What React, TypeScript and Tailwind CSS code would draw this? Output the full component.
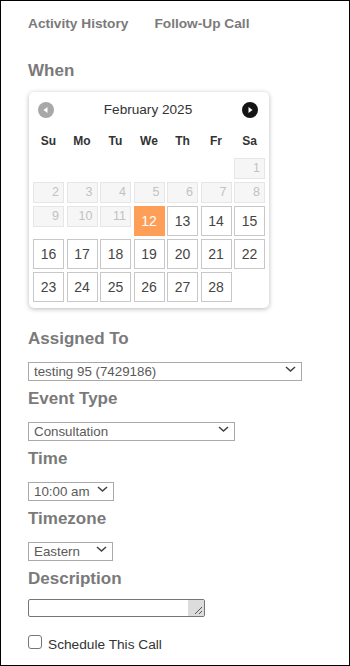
import React from "react"

const font = { fontFamily: '"Liberation Sans", Arial, sans-serif' }

type Cell = { day: number; kind: "past" | "today" | "open" } | null

const rows: Cell[][] = [
  [null, null, null, null, null, null, { day: 1, kind: "past" }],
  [2, 3, 4, 5, 6, 7, 8].map((d) => ({ day: d, kind: "past" as const })),
  [
    { day: 9, kind: "past" },
    { day: 10, kind: "past" },
    { day: 11, kind: "past" },
    { day: 12, kind: "today" },
    { day: 13, kind: "open" },
    { day: 14, kind: "open" },
    { day: 15, kind: "open" },
  ],
  [16, 17, 18, 19, 20, 21, 22].map((d) => ({ day: d, kind: "open" as const })),
  [
    ...[23, 24, 25, 26, 27, 28].map((d) => ({ day: d, kind: "open" as const })),
    null,
  ],
]

const weekdays = ["Su", "Mo", "Tu", "We", "Th", "Fr", "Sa"]

function DayCell({ cell }: { cell: Cell }) {
  if (!cell) return <div className="w-[31px] shrink-0" />
  if (cell.kind === "past") {
    return (
      <div className="flex h-[21px] w-[31px] shrink-0 items-center justify-end border border-[#e6e6e6] bg-[#f6f6f6] pr-[4px] text-[12.5px] leading-none text-[#c2c2c2]">
        {cell.day}
      </div>
    )
  }
  if (cell.kind === "today") {
    return (
      <div className="flex h-[30px] w-[31px] shrink-0 items-center justify-center bg-[#ff9f57] text-[14px] leading-none text-white">
        {cell.day}
      </div>
    )
  }
  return (
    <div className="flex h-[30px] w-[31px] shrink-0 items-center justify-center border border-[#c8c8c8] bg-white text-[14px] leading-none text-[#454545]">
      {cell.day}
    </div>
  )
}

function NavButton({ dir }: { dir: "prev" | "next" }) {
  const prev = dir === "prev"
  return (
    <svg width="16" height="16" viewBox="0 0 16 16" className="shrink-0">
      <circle cx="8" cy="8" r="8" fill={prev ? "#a8a8a8" : "#141414"} />
      {prev ? (
        <path d="M5.5 8 L9.5 5 L9.5 11 Z" fill="#fff" />
      ) : (
        <path d="M10.5 8 L6.5 5 L6.5 11 Z" fill="#fff" />
      )}
    </svg>
  )
}

function Calendar() {
  return (
    <div className="ml-[1px] mt-[11px] w-[240px] rounded-[5px] bg-white pt-[8px] pb-[6px] shadow-[0_1px_5px_rgba(0,0,0,0.28)]">
      <div className="flex h-[20px] items-center justify-between pl-[9px] pr-[11px]">
        <NavButton dir="prev" />
        <span className="text-[13.6px] text-[#333]">February 2025</span>
        <NavButton dir="next" />
      </div>
      <div className="mt-[13px] flex gap-[2.5px] px-[4px]">
        {weekdays.map((w) => (
          <div
            key={w}
            className="w-[31px] text-center text-[12px] font-bold leading-[16px] text-[#333]"
          >
            {w}
          </div>
        ))}
      </div>
      <div className="mt-[9px] flex flex-col gap-[3px] px-[4px]">
        {rows.map((row, i) => (
          <div key={i} className="flex items-start gap-[2.5px]">
            {row.map((cell, j) => (
              <DayCell key={j} cell={cell} />
            ))}
          </div>
        ))}
      </div>
    </div>
  )
}

function Chevron() {
  return (
    <svg width="11" height="7" viewBox="0 0 11 7" className="pointer-events-none absolute right-[6px] top-1/2 -translate-y-1/2">
      <path d="M1 1.5 L5.5 5.5 L10 1.5" fill="none" stroke="#444" strokeWidth="1.6" />
    </svg>
  )
}

function Select({ width, value }: { width: string; value: string }) {
  return (
    <div className={`relative mt-[10px] h-[19px] ${width}`}>
      <select
        defaultValue={value}
        style={font}
        className="h-full w-full appearance-none rounded-none border border-[#a9a9a9] bg-white py-0 pl-[5px] pr-[20px] text-[13.33px] leading-[17px] text-[#5a5a5a] outline-none"
      >
        <option value={value}>{value}</option>
      </select>
      <Chevron />
    </div>
  )
}

function Label({ children, first }: { children: React.ReactNode; first?: boolean }) {
  return (
    <div
      className={`${first ? "mt-[21px]" : "mt-[11px]"} text-[17px] font-bold leading-[20px] text-[#7a7a7a]`}
    >
      {children}
    </div>
  )
}

export default function App() {
  return (
    <div
      style={font}
      className="h-[666px] w-[350px] overflow-hidden border border-black bg-white pt-[15px] pl-[27px]"
    >
      <div className="flex gap-[26px] text-[13.7px] font-bold leading-[16px] text-[#7a7a7a]">
        <span>Activity History</span>
        <span>Follow-Up Call</span>
      </div>

      <div className="mt-[29px] text-[17px] font-bold leading-[20px] text-[#7a7a7a]">When</div>
      <Calendar />

      <Label first>Assigned To</Label>
      <Select width="w-[274px]" value="testing 95 (7429186)" />

      <Label>Event Type</Label>
      <Select width="w-[207px]" value="Consultation" />

      <Label>Time</Label>
      <Select width="w-[86px]" value="10:00 am" />

      <Label>Timezone</Label>
      <Select width="w-[85px]" value="Eastern" />

      <Label>Description</Label>
      <div className="relative mt-[10px] flex h-[18px] w-[177px] overflow-hidden rounded-[2px] border border-[#767676] bg-white">
        <textarea className="h-full min-w-0 flex-1 resize-none bg-transparent outline-none" />
        <div className="relative h-full w-[16px] bg-[#dcdcdc]">
          <svg width="9" height="9" viewBox="0 0 9 9" className="absolute bottom-[1px] right-[1px]">
            <path d="M8 1 L1 8 M8 5 L5 8" stroke="#555" strokeWidth="1" fill="none" />
          </svg>
        </div>
      </div>

      <label className="mt-[18px] flex items-start">
        <input
          type="checkbox"
          className="h-[14px] w-[14px] appearance-none rounded-[3px] border border-[#767676] bg-white"
        />
        <span className="ml-[6px] mt-[2px] text-[13.7px] leading-[16px] text-[#333]">
          Schedule This Call
        </span>
      </label>
    </div>
  )
}
